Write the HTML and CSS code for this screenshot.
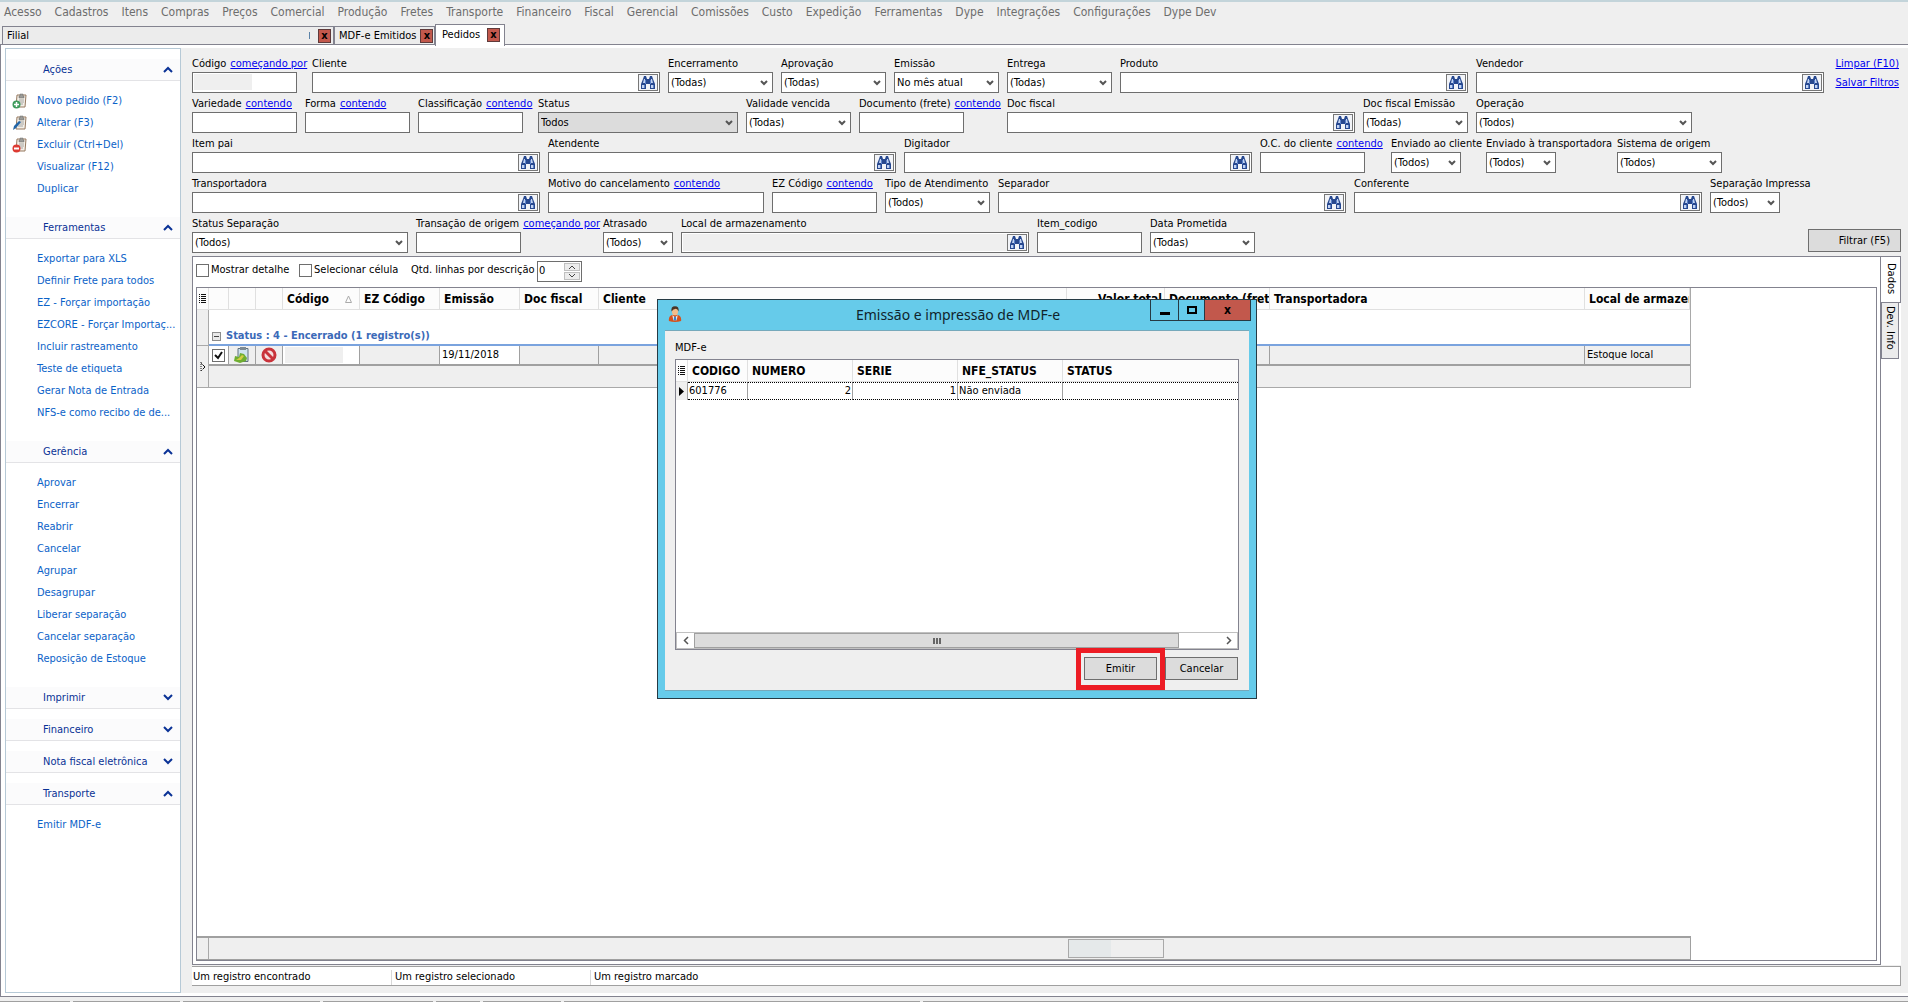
FILE: index.html
```html
<!DOCTYPE html>
<html lang="pt-BR">
<head>
<meta charset="utf-8">
<title>Pedidos</title>
<link rel="stylesheet" href="styles.css">
</head>
<body>
<svg class="defs" aria-hidden="true">
  <symbol id="find" viewBox="0 0 16 15">
    <path d="M4 1h2l1 3h2l1-3h2l1 3 2 5v5h-5V9H6v5H1V9l2-5z" fill="#27488f"/>
    <path d="M4 4h1v4H3zM11 4h1l1 4h-2zM2 10h2v3H2zM11 10h2v3h-2z" fill="#c3d4f3"/>
    <path d="M5 5h1v4H5zM10 5h1v4h-1zM4 10h1v3H4zM13 10h1v3h-1z" fill="#5c82c8"/>
  </symbol>
  <symbol id="clip" viewBox="0 0 16 16">
    <path d="M5 2h9l-1 12H4z" fill="#f3efe8" stroke="#96795f"/>
    <path d="M8 1h3v2h1v2H7V3h1z" fill="#9b9b98" stroke="#6e6e6b" stroke-width=".5"/>
    <path d="M7 7h5M7 9h5M6 11h5" stroke="#a5a4a1"/>
  </symbol>
  <symbol id="up" viewBox="0 0 10 7"><path d="M1 6l4-4 4 4" fill="none" stroke="#0a3296" stroke-width="2"/></symbol>
  <symbol id="down" viewBox="0 0 10 7"><path d="M1 1l4 4 4-4" fill="none" stroke="#0a3296" stroke-width="2"/></symbol>
  <symbol id="list" viewBox="0 0 7 9"><path d="M0 .5h1M2 .5h5M0 2.5h1M2 2.5h5M0 4.5h1M2 4.5h5M0 6.5h1M2 6.5h5M0 8.5h1M2 8.5h5" stroke="#111"/></symbol>
</svg>

<nav class="menu">
  <a href="#">Acesso</a><a href="#">Cadastros</a><a href="#">Itens</a><a href="#">Compras</a><a href="#">Preços</a><a href="#">Comercial</a><a href="#">Produção</a><a href="#">Fretes</a><a href="#">Transporte</a><a href="#">Financeiro</a><a href="#">Fiscal</a><a href="#">Gerencial</a><a href="#">Comissões</a><a href="#">Custo</a><a href="#">Expedição</a><a href="#">Ferramentas</a><a href="#">Dype</a><a href="#">Integrações</a><a href="#">Configurações</a><a href="#">Dype Dev</a>
</nav>

<div class="tabs">
  <div class="tab tab-wide"><span>Filial</span><i class="cut"></i><button class="close">x</button></div>
  <div class="tab"><span>MDF-e Emitidos</span><button class="close">x</button></div>
  <div class="tab tab-on"><span>Pedidos</span><button class="close">x</button></div>
</div>

<div class="main">
  <aside class="side">
    <section>
      <h2>Ações<svg><use href="#up"/></svg></h2>
      <ul>
        <li><svg class="ic" viewBox="0 0 16 16"><use href="#clip"/><circle cx="4.500" cy="11.500" r="4" fill="#3e9b5c"/><path d="M4.500 9v5M2 11.500h5" stroke="#fff" stroke-width="1.500"/></svg><a href="#">Novo pedido (F2)</a></li>
        <li><svg class="ic" viewBox="0 0 16 16"><use href="#clip"/><path d="M1 15l1-4 5-5 2 1-5 6z" fill="#2165a8"/></svg><a href="#">Alterar (F3)</a></li>
        <li><svg class="ic" viewBox="0 0 16 16"><use href="#clip"/><circle cx="4.500" cy="11.500" r="4" fill="#dd3a32"/><path d="M2 11.500h5" stroke="#fff" stroke-width="2"/></svg><a href="#">Excluir (Ctrl+Del)</a></li>
        <li><a href="#">Visualizar (F12)</a></li>
        <li><a href="#">Duplicar</a></li>
      </ul>
    </section>
    <section>
      <h2>Ferramentas<svg><use href="#up"/></svg></h2>
      <ul>
        <li><a href="#">Exportar para XLS</a></li>
        <li><a href="#">Definir Frete para todos</a></li>
        <li><a href="#">EZ - Forçar importação</a></li>
        <li><a href="#">EZCORE - Forçar Importaç...</a></li>
        <li><a href="#">Incluir rastreamento</a></li>
        <li><a href="#">Teste de etiqueta</a></li>
        <li><a href="#">Gerar Nota de Entrada</a></li>
        <li><a href="#">NFS-e como recibo de de...</a></li>
      </ul>
    </section>
    <section>
      <h2>Gerência<svg><use href="#up"/></svg></h2>
      <ul>
        <li><a href="#">Aprovar</a></li>
        <li><a href="#">Encerrar</a></li>
        <li><a href="#">Reabrir</a></li>
        <li><a href="#">Cancelar</a></li>
        <li><a href="#">Agrupar</a></li>
        <li><a href="#">Desagrupar</a></li>
        <li><a href="#">Liberar separação</a></li>
        <li><a href="#">Cancelar separação</a></li>
        <li><a href="#">Reposição de Estoque</a></li>
      </ul>
    </section>
    <section><h2>Imprimir<svg><use href="#down"/></svg></h2></section>
    <section><h2>Financeiro<svg><use href="#down"/></svg></h2></section>
    <section><h2>Nota fiscal eletrônica<svg><use href="#down"/></svg></h2></section>
    <section>
      <h2>Transporte<svg><use href="#up"/></svg></h2>
      <ul><li><a href="#">Emitir MDF-e</a></li></ul>
    </section>
  </aside>

  <main class="work">
    <div class="filters">
      <div class="rows">
        <div class="row">
          <div class="f f-cod"><div class="lb"><label for="f1">Código</label><a href="#">começando por</a></div><div class="masked s"><i class="mask"></i><input id="f1"></div></div>
          <div class="f"><div class="lb"><label for="f2">Cliente</label></div><div class="look"><input id="f2"><button aria-label="Buscar"><svg><use href="#find"/></svg></button></div></div>
          <div class="f"><div class="lb"><label for="f3">Encerramento</label></div><select id="f3" class="s"><option>(Todas)</option></select></div>
          <div class="f"><div class="lb"><label for="f4">Aprovação</label></div><select id="f4" class="s"><option>(Todas)</option></select></div>
          <div class="f"><div class="lb"><label for="f5">Emissão</label></div><select id="f5" class="s"><option>No mês atual</option></select></div>
          <div class="f"><div class="lb"><label for="f6">Entrega</label></div><select id="f6" class="s"><option>(Todas)</option></select></div>
          <div class="f"><div class="lb"><label for="f7">Produto</label></div><div class="look"><input id="f7"><button aria-label="Buscar"><svg><use href="#find"/></svg></button></div></div>
          <div class="f"><div class="lb"><label for="f8">Vendedor</label></div><div class="look"><input id="f8"><button aria-label="Buscar"><svg><use href="#find"/></svg></button></div></div>
        </div>
        <div class="row">
          <div class="f"><div class="lb"><label for="f9">Variedade</label><a href="#">contendo</a></div><input id="f9" class="s"></div>
          <div class="f"><div class="lb"><label for="f10">Forma</label><a href="#">contendo</a></div><input id="f10" class="s"></div>
          <div class="f f-cod"><div class="lb"><label for="f11">Classificação</label><a href="#">contendo</a></div><input id="f11" class="s"></div>
          <div class="f"><div class="lb"><label for="f12">Status</label></div><select id="f12" class="st"><option>Todos</option></select></div>
          <div class="f"><div class="lb"><label for="f13">Validade vencida</label></div><select id="f13" class="s"><option>(Todas)</option></select></div>
          <div class="f f-doc"><div class="lb"><label for="f14">Documento (frete)</label><a href="#">contendo</a></div><input id="f14" class="s"></div>
          <div class="f"><div class="lb"><label for="f15">Doc fiscal</label></div><div class="look"><input id="f15"><button aria-label="Buscar"><svg><use href="#find"/></svg></button></div></div>
          <div class="f"><div class="lb"><label for="f16">Doc fiscal Emissão</label></div><select id="f16" class="s"><option>(Todas)</option></select></div>
          <div class="f"><div class="lb"><label for="f17">Operação</label></div><select id="f17" class="m"><option>(Todos)</option></select></div>
        </div>
        <div class="row">
          <div class="f"><div class="lb"><label for="f18">Item pai</label></div><div class="look"><input id="f18"><button aria-label="Buscar"><svg><use href="#find"/></svg></button></div></div>
          <div class="f"><div class="lb"><label for="f19">Atendente</label></div><div class="look"><input id="f19"><button aria-label="Buscar"><svg><use href="#find"/></svg></button></div></div>
          <div class="f"><div class="lb"><label for="f20">Digitador</label></div><div class="look"><input id="f20"><button aria-label="Buscar"><svg><use href="#find"/></svg></button></div></div>
          <div class="f f-oc"><div class="lb"><label for="f21">O.C. do cliente</label><a href="#">contendo</a></div><input id="f21" class="s"></div>
          <div class="f f-env"><div class="lb"><label for="f22">Enviado ao cliente</label></div><select id="f22" class="xs"><option>(Todos)</option></select></div>
          <div class="f f-oc"><div class="lb"><label for="f23">Enviado à transportadora</label></div><select id="f23" class="xs"><option>(Todos)</option></select></div>
          <div class="f"><div class="lb"><label for="f24">Sistema de origem</label></div><select id="f24" class="s"><option>(Todos)</option></select></div>
        </div>
        <div class="row">
          <div class="f"><div class="lb"><label for="f25">Transportadora</label></div><div class="look"><input id="f25"><button aria-label="Buscar"><svg><use href="#find"/></svg></button></div></div>
          <div class="f"><div class="lb"><label for="f26">Motivo do cancelamento</label><a href="#">contendo</a></div><input id="f26" class="m"></div>
          <div class="f"><div class="lb"><label for="f27">EZ Código</label><a href="#">contendo</a></div><input id="f27" class="s"></div>
          <div class="f"><div class="lb"><label for="f28">Tipo de Atendimento</label></div><select id="f28" class="s"><option>(Todos)</option></select></div>
          <div class="f"><div class="lb"><label for="f29">Separador</label></div><div class="look"><input id="f29"><button aria-label="Buscar"><svg><use href="#find"/></svg></button></div></div>
          <div class="f"><div class="lb"><label for="f30">Conferente</label></div><div class="look"><input id="f30"><button aria-label="Buscar"><svg><use href="#find"/></svg></button></div></div>
          <div class="f"><div class="lb"><label for="f31">Separação Impressa</label></div><select id="f31" class="xs"><option>(Todos)</option></select></div>
        </div>
        <div class="row">
          <div class="f"><div class="lb"><label for="f32">Status Separação</label></div><select id="f32" class="m"><option>(Todos)</option></select></div>
          <div class="f f-tr"><div class="lb"><label for="f33">Transação de origem</label><a href="#">começando por</a></div><input id="f33" class="s"></div>
          <div class="f"><div class="lb"><label for="f34">Atrasado</label></div><select id="f34" class="xs"><option>(Todos)</option></select></div>
          <div class="f"><div class="lb"><label for="f35">Local de armazenamento</label></div><div class="look look-off"><input id="f35"><button aria-label="Buscar"><svg><use href="#find"/></svg></button></div></div>
          <div class="f"><div class="lb"><label for="f36">Item_codigo</label></div><input id="f36" class="s"></div>
          <div class="f"><div class="lb"><label for="f37">Data Prometida</label></div><select id="f37" class="s"><option>(Todas)</option></select></div>
        </div>
      </div>
      <div class="acts"><a href="#">Limpar (F10)</a><a href="#">Salvar Filtros</a><button class="filter">Filtrar (F5)</button></div>
    </div>

    <div class="data">
      <div class="page">
        <div class="opts">
          <label><input type="checkbox">Mostrar detalhe</label>
          <label><input type="checkbox">Selecionar célula</label>
          <label for="qtd" class="qtd">Qtd. linhas por descrição</label>
          <div class="spin"><input id="qtd" value="0"><span><button aria-label="Mais"><svg viewBox="0 0 6 4"><path d="M0 4l3-3 3 3" fill="none" stroke="#444"/></svg></button><button aria-label="Menos"><svg viewBox="0 0 6 4"><path d="M0 0l3 3 3-3" fill="none" stroke="#444"/></svg></button></span></div>
        </div>
        <div class="grid">
          <table>
            <colgroup><col class="c12"><col class="c20"><col class="c27"><col class="c27"><col class="c77"><col class="c80"><col class="c80"><col class="c79"><col class="c468"><col class="c98"><col class="c105"><col class="c315"><col class="c105"></colgroup>
            <thead><tr><th class="h"><svg class="li"><use href="#list"/></svg></th><th></th><th></th><th></th><th>Código<svg class="sort" viewBox="0 0 7 8"><path d="M3.500 1L6.500 7.500H.5z" fill="none" stroke="#aaa"/></svg></th><th>EZ Código</th><th>Emissão</th><th>Doc fiscal</th><th>Cliente</th><th class="r">Valor total</th><th>Documento (frete)</th><th>Transportadora</th><th>Local de armazenamento</th></tr></thead>
            <tbody>
              <tr class="group"><td class="ind"></td><td colspan="12"><div><i class="minus"></i>Status : 4 - Encerrado (1 registro(s))</div></td></tr>
              <tr class="rec">
                <td class="ind" rowspan="2"><svg class="arr" viewBox="0 0 6 10"><path d="M1 0v10M1 1l4 4-4 4" fill="none" stroke="#111" stroke-dasharray="1 1"/><path d="M3 3l2 2-2 2" fill="none" stroke="#111"/></svg></td>
                <td class="w"><input type="checkbox" checked aria-label="Marcar registro"></td>
                <td class="c"><svg class="ri" viewBox="0 0 16 16"><path d="M4 1.500h10v13H4z" fill="#cfe3ef" stroke="#60717e"/><path d="M6 0h6v3H6z" fill="#7d8a93"/><path d="M0 14l1-5 4 1 1-4 4 1 3 4-1 3-6 2z" fill="#6fae31"/><path d="M2 13l3-2 3-3 2 1-3 4z" fill="#d3cc43"/></svg></td>
                <td class="c"><svg class="ri" viewBox="0 0 16 16"><circle cx="8" cy="8" r="6" fill="#f4dede" stroke="#c9333b" stroke-width="3"/><path d="M4 4l8 8" stroke="#c9333b" stroke-width="3"/></svg></td>
                <td class="w"><i class="blank"></i></td><td></td><td class="w date">19/11/2018</td><td></td><td></td><td></td><td></td><td></td><td>Estoque local</td>
              </tr>
              <tr class="sum"><td colspan="12"></td></tr>
            </tbody>
          </table>
          <div class="foot"><i class="total"></i></div>
        </div>
      </div>
      <div class="vtabs"><button class="von">Dados</button><button class="voff">Dev. Info</button></div>
    </div>
    <div class="status"><span>Um registro encontrado</span><span>Um registro selecionado</span><span>Um registro marcado</span></div>
  </main>
</div>
<div class="under"><i class="u1"></i><i class="u2"></i><i class="u3"></i><i class="u4"></i><i class="u5"></i><i class="u6"></i><i class="u7"></i><i class="u8"></i></div>

<div class="dialog" role="dialog" aria-labelledby="dt">
  <div class="bar">
    <svg class="user" viewBox="0 0 16 18"><path d="M1 17v-2q0-4 4-5h6q4 1 4 5v2q-7 2-14 0z" fill="#d5521d"/><path d="M5 10l3 3 3-3-1 6H6z" fill="#e8f0f7"/><path d="M7 12h2l.5 3-1.500 2-1.500-2z" fill="#3d7fc4"/><ellipse cx="8" cy="6" rx="3.500" ry="4.500" fill="#f2bd8b"/><path d="M4 6q-1-6 4-6 5 0 4 6-1-3-3-3-3 0-5 3z" fill="#4a3426"/></svg>
    <h1 id="dt">Emissão e impressão de MDF-e</h1>
    <div class="wb"><button class="min" aria-label="Minimizar"><i></i></button><button class="max" aria-label="Maximizar"><i></i></button><button class="x">x</button></div>
  </div>
  <div class="body">
    <div class="cap">MDF-e</div>
    <div class="list">
      <table>
        <colgroup><col class="c12"><col class="c60"><col class="c105"><col class="c105"><col class="c105"><col></colgroup>
        <thead><tr><th class="h"><svg class="li"><use href="#list"/></svg></th><th>CODIGO</th><th>NUMERO</th><th>SERIE</th><th>NFE_STATUS</th><th>STATUS</th></tr></thead>
        <tbody><tr><td class="ind"><svg class="tri" viewBox="0 0 5 9"><path d="M0 0l5 4.500L0 9z"/></svg></td><td>601776</td><td class="r">2</td><td class="r">1</td><td>Não enviada</td><td></td></tr></tbody>
      </table>
      <div class="sb"><button aria-label="Esquerda"><svg viewBox="0 0 6 9"><path d="M5 1L1.500 4.500 5 8" fill="none" stroke="#555" stroke-width="1.500"/></svg></button><span class="thumb"><i></i></span><button aria-label="Direita"><svg viewBox="0 0 6 9"><path d="M1 1l3.500 3.500L1 8" fill="none" stroke="#555" stroke-width="1.500"/></svg></button></div>
    </div>
    <div class="btns"><span class="hot"><button>Emitir</button></span><button>Cancelar</button></div>
  </div>
</div>
</body>
</html>
```
FILE: styles.css
```css
* { box-sizing: border-box; }
body {
  margin: 0;
  min-height: 100vh;
  display: flex;
  flex-direction: column;
  background: #efefef;
  color: #000;
  font: 11px/14px "DejaVu Sans Condensed", "DejaVu Sans", sans-serif;
}
button, input, select { font: inherit; color: inherit; margin: 0; padding: 0; border-radius: 0; }
button { background: none; border: 0; }
i { display: block; font-style: normal; }
svg { display: block; flex: none; }
.defs { display: none; }

/* menu and document tabs */
.menu {
  display: flex;
  gap: 13px;
  height: 24px;
  padding: 3px 4px 0;
  border-top: 2px solid #c3d4da;
  font-size: 12px;
}
.menu a { color: #6d6d6d; text-decoration: none; white-space: nowrap; }
.tabs { display: flex; align-items: flex-end; height: 20px; padding-left: 2px; }
.tab {
  display: flex;
  align-items: center;
  gap: 4px;
  width: 101px;
  height: 18px;
  padding: 0 2px 0 4px;
  border: 1px solid #83838f;
  border-bottom: 0;
  background: #ececec;
  white-space: nowrap;
}
.tab span { flex: 1; }
.tab-wide { width: 332px; gap: 8px; }
.tab-wide .cut { width: 1px; height: 7px; background: #5b83a8; }
.tab-on { width: 70px; height: 22px; margin-bottom: -2px; padding: 0 4px 2px 6px; background: #fff; z-index: 1; }
.close {
  flex: none;
  width: 13px;
  height: 14px;
  border: 1px solid #5f3a3a;
  background: #c2584c;
  font-weight: bold;
  line-height: 10px;
  text-align: center;
}

/* frame */
.main {
  flex: 1;
  display: flex;
  padding: 3px 0 3px 4px;
  border: solid #83838f;
  border-width: 1px 0 1px 1px;
  background: #fff;
}
.side { flex: none; width: 176px; padding-top: 10px; border: 1px solid #b6c9d6; background: #fff; }
.side section { margin-bottom: 10px; }
.side h2 {
  display: flex;
  align-items: center;
  justify-content: space-between;
  height: 22px;
  margin: 0;
  padding: 0 7px 0 37px;
  border-bottom: 1px solid #e3e3e6;
  background: #fbfbfc;
  color: #0a3296;
  font-size: 11px;
  font-weight: normal;
}
.side h2 svg { width: 10px; height: 7px; }
.side ul { margin: 0; padding: 9px 0 7px; list-style: none; }
.side li { display: flex; align-items: center; height: 22px; padding-left: 31px; white-space: nowrap; }
.side li .ic { width: 16px; height: 16px; margin: 0 9px 0 -25px; }
.side li a { color: #0b62c8; text-decoration: none; }
.work { flex: 1; display: flex; flex-direction: column; min-width: 0; padding: 8px 7px 7px 11px; background: #efefef; }

/* filters */
.filters { display: flex; height: 200px; }
.rows { flex: 1; min-width: 0; }
.row { display: flex; gap: 8px; height: 40px; }
.f { flex: none; white-space: nowrap; }
.f-cod { width: 112px; }
.f-doc { width: 140px; }
.f-oc { width: 123px; }
.f-env { width: 87px; }
.f-tr { width: 179px; }
.lb { display: flex; gap: 4px; width: 0; height: 16px; padding-top: 1px; }
a { color: #0000f0; }
.f input, .f select { display: block; height: 21px; border: 1px solid #6e6e6e; background-color: #fff; }
.s { width: 105px; }
.xs { width: 70px; }
.m { width: 216px; }
.st { width: 200px; }
select {
  appearance: none;
  padding: 0 2px;
  background: #fff url("data:image/svg+xml,%3Csvg xmlns='http://www.w3.org/2000/svg' width='8' height='6'%3E%3Cpath d='M1 1l3 3 3-3' fill='none' stroke='%23555' stroke-width='2'/%3E%3C/svg%3E") no-repeat right 4px center;
}
.f select { padding: 0 2px; }
.f select.st { background-color: #dcdcdc; }
.masked { display: flex; height: 21px; padding: 1px; border: 1px solid #6e6e6e; background: #fff; }
.masked .mask { width: 58px; height: 16px; background: #efefef; }
.f .masked input { flex: 1; min-width: 0; height: 17px; border: 0; }
.look { display: flex; width: 348px; height: 21px; padding: 1px; border: 1px solid #6e6e6e; background: #fff; }
.f .look input { flex: 1; min-width: 0; height: 17px; border: 0; }
.look button { display: grid; place-items: center; width: 20px; height: 17px; border: 1px solid #777; background: #f2f4f8; }
.look svg { width: 16px; height: 15px; }
.f .look-off input { background: #efefef; }
.acts { flex: none; display: flex; flex-direction: column; align-items: flex-end; gap: 5px; padding-top: 1px; white-space: nowrap; }
.acts a { margin-right: 2px; }
.filter { width: 93px; height: 23px; margin-top: auto; margin-bottom: 4px; padding-right: 10px; border: 1px solid #6e6e6e; background: #dcdcdc; text-align: right; }

/* data page */
.data { flex: 1; display: flex; }
.page { flex: 1; display: flex; flex-direction: column; min-width: 0; padding: 0 3px 3px; border: 1px solid #83838f; background: #fff; }
.opts { display: flex; align-items: center; height: 30px; padding-bottom: 4px; white-space: nowrap; }
.opts label { display: flex; align-items: center; gap: 2px; width: 103px; }
.opts label.qtd { width: 126px; }
.opts label:nth-child(2) { width: 112px; }
input[type="checkbox"] { appearance: none; flex: none; width: 13px; height: 13px; border: 1px solid #6e6e6e; background: #fff; }
input[type="checkbox"]:checked { background: #fff url("data:image/svg+xml,%3Csvg xmlns='http://www.w3.org/2000/svg' width='9' height='9'%3E%3Cpath d='M1 4l3 3 4-6' fill='none' stroke='%23111' stroke-width='2'/%3E%3C/svg%3E") no-repeat center; }
.spin { display: flex; width: 45px; height: 21px; margin-top: 2px; padding: 1px; border: 1px solid #6e6e6e; background: #fff; }
.spin input { flex: 1; min-width: 0; border: 0; }
.spin span { display: flex; flex-direction: column; gap: 1px; width: 16px; }
.spin button { flex: 1; display: grid; place-items: center; border: 1px solid #c0c0c0; background: #ececec; }
.spin svg { width: 6px; height: 4px; }
.grid { flex: 1; display: flex; flex-direction: column; justify-content: space-between; align-items: flex-start; border: 1px solid #83838f; background: #fff; overflow: hidden; }
table { border-collapse: separate; border-spacing: 0; table-layout: fixed; }
.grid table { width: 1494px; border-right: 1px solid #a9a9a9; }
.c12 { width: 12px; }
.c20 { width: 20px; }
.c27 { width: 27px; }
.c60 { width: 60px; }
.c77 { width: 77px; }
.c79 { width: 79px; }
.c80 { width: 80px; }
.c98 { width: 98px; }
.c105 { width: 105px; }
.c315 { width: 315px; }
.c468 { width: 468px; }
th {
  height: 22px;
  padding: 1px 2px 0 4px;
  overflow: hidden;
  border: solid #e0e0e0;
  border-width: 0 1px 1px 0;
  background: #fcfcfc;
  font-size: 12px;
  text-align: left;
  white-space: nowrap;
}
th.h { padding: 0 2px; }
th .li { width: 7px; height: 9px; }
.sort { display: inline-block; width: 7px; height: 8px; margin-left: 16px; }
.r { text-align: right; }
td { padding: 0 2px; white-space: nowrap; }
.ind { padding: 0; border-right: 1px solid #a9a9a9; border-bottom: 1px solid #a9a9a9; background: #efefef; }
.ind svg { margin: 0 auto; }
.arr { width: 6px; height: 10px; }
.group td { height: 36px; vertical-align: bottom; }
.group td + td { border-bottom: 2px solid #7aa3de; color: #3b6ab8; font-weight: bold; }
.group div { display: flex; align-items: center; gap: 5px; padding: 0 0 1px 1px; }
.minus { width: 9px; height: 9px; border: 1px solid #8d8d8d; background: linear-gradient(#444, #444) center / 5px 1px no-repeat #e8e8e8; }
.rec td:not(.ind) { height: 20px; border-right: 1px solid #a0a0a0; border-bottom: 2px solid #a0a0a0; background: #efefef; }
.rec td:last-child { border-right: 0 !important; }
.rec td.w { background: #fff; }
.rec input { display: block; margin: 0 auto; }
.ri { width: 16px; height: 16px; margin: 0 auto; }
.rec .blank { width: 58px; height: 16px; background: #efefef; }
.sum td { height: 22px; border-bottom: 1px solid #a9a9a9; background: #efefef; }
.foot { width: 1494px; height: 24px; padding: 1px 0 0 871px; border: solid #a0a0a0; border-width: 2px 1px 1px 0; background: linear-gradient(#a9a9a9, #a9a9a9) 11px 0 / 1px 100% no-repeat #efefef; }
.total { width: 96px; height: 19px; border: 1px solid #a9a9a9; background: linear-gradient(90deg, #e5e9ea 42px, #efefef 42px); }
.vtabs { display: flex; flex-direction: column; align-items: flex-start; width: 20px; background: #fff; }
.vtabs button { writing-mode: vertical-rl; border: 1px solid #83838f; text-align: left; }
.vtabs .von { width: 20px; height: 47px; padding: 6px 2px; border-left: 0; background: #fff; }
.vtabs .voff { width: 18px; height: 56px; padding: 3px 0; border-top: 0; background: #ececec; }
.status { display: flex; height: 20px; margin-top: 1px; padding: 3px 1px 0; border: 1px solid #a0a0a0; border-left: 0; background: #fff; white-space: nowrap; }
.status span { width: 199px; border-right: 1px solid #d8d8d8; }
.status span + span { padding-left: 3px; }
.status span:last-child { border: 0; }
.under { display: flex; align-items: flex-end; gap: 3px; height: 5px; }
.under i { height: 1px; background: #a0a0a0; }
.u1 { width: 70px; }
.u2 { width: 107px; }
.u3 { width: 137px; }
.u4 { width: 110px; }
.u5 { width: 44px; }
.u6 { width: 78px; }
.u7 { width: 356px; }
.u8 { flex: 1; }

/* dialog window */
.dialog {
  position: absolute;
  left: 657px;
  top: 299px;
  width: 600px;
  height: 400px;
  display: flex;
  flex-direction: column;
  padding: 0 7px 7px;
  border: 1px solid #263a44;
  background: #66cbea;
  z-index: 2;
}
.bar { display: flex; height: 30px; padding-left: 3px; }
.user { width: 14px; height: 18px; margin-top: 5px; }
.bar h1 { flex: 1; margin: 0; padding-left: 84px; font: 14px/30px "Noto Sans", sans-serif; text-align: center; color: #10242c; }
.wb { display: flex; height: 21px; border: 1px solid #263a44; border-top: 0; margin-right: -2px; }
.wb button { display: grid; place-items: center; border-right: 1px solid #263a44; }
.wb .min { width: 28px; }
.wb .max { width: 26px; }
.wb .x { width: 45px; border: 0; background: #c2584c; font-weight: bold; font-size: 12px; }
.min i { width: 10px; height: 3px; margin-top: 6px; background: #000; }
.max i { width: 10px; height: 8px; border: 2px solid #000; }
.body { flex: 1; display: flex; flex-direction: column; padding: 10px 10px 0; border: solid #76a9bb; border-width: 1px 0; background: #efefef; }
.cap { height: 18px; }
.list { height: 291px; display: flex; flex-direction: column; justify-content: space-between; border: 1px solid #83838f; background: #fff; }
.list table { width: 100%; }
.list td { height: 18px; border: solid #a0a0a0; border-width: 0 1px 0 0; padding: 0 1px; }
.list td + td { border-bottom: 1px dotted #000; border-top: 1px dotted #000; }
.list th:last-child, .list td:last-child { border-right: 0; }
.tri { width: 5px; height: 9px; }
.sb { display: flex; height: 17px; border: 1px solid #c0c0c0; }
.sb button { display: grid; place-items: center; width: 17px; }
.sb svg { width: 6px; height: 9px; }
.thumb { width: 485px; margin-right: auto; display: grid; place-items: center; border: 1px solid #a0a0a0; background: #dcdcdc; }
.thumb i { width: 8px; height: 6px; background: repeating-linear-gradient(90deg, #666 0 2px, transparent 2px 3px); }
.btns { display: flex; justify-content: flex-end; align-items: flex-start; height: 40px; padding-right: 1px; }
.btns button { width: 73px; height: 23px; margin-top: 7px; border: 1px solid #6e6e6e; background: #dcdcdc; }
.btns .hot { width: 89px; height: 42px; margin-top: -2px; border: 5px solid #ed1c24; }
.btns .hot button { margin: 4px 0 0 3px; }
```
